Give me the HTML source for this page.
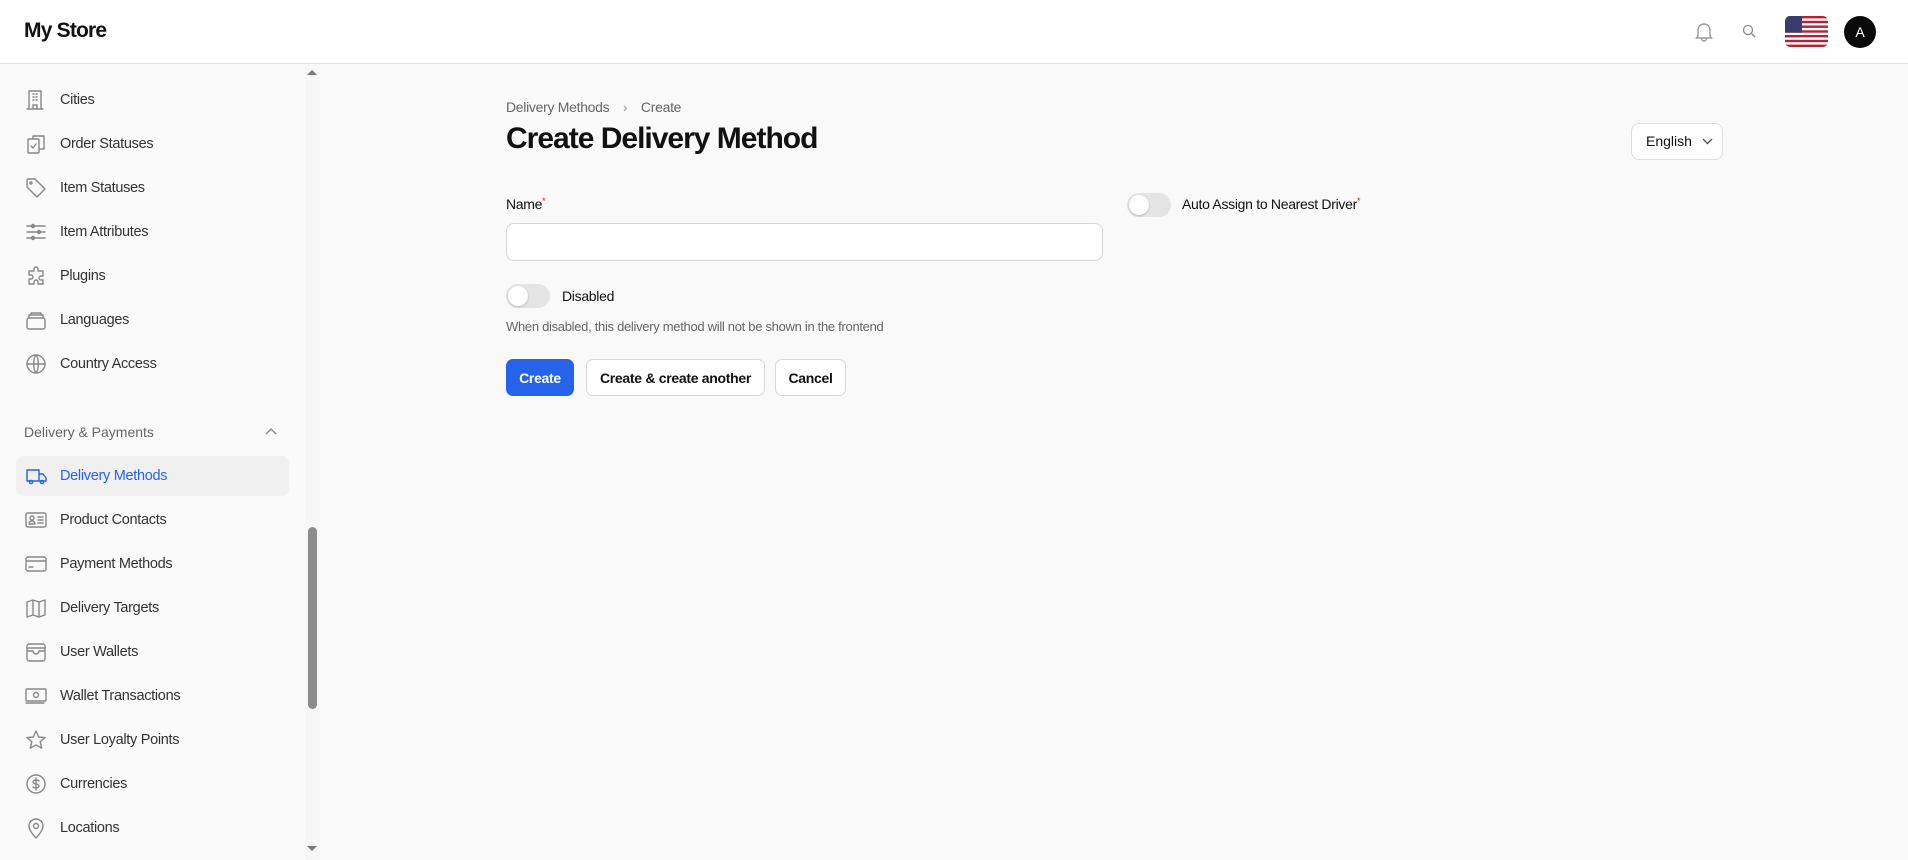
<!DOCTYPE html>
<html><head><meta charset="utf-8"><style>
*{box-sizing:border-box;margin:0;padding:0}
body{width:1908px;height:860px;overflow:hidden;background:#f9f9f9;font-family:"Liberation Sans",sans-serif;color:#111;position:relative}
.hdr{position:absolute;left:0;top:0;width:1908px;height:64px;background:#fff;border-bottom:1px solid #e3e3e3}
.logo{position:absolute;left:24px;top:19px;font-size:21px;font-weight:bold;letter-spacing:-0.8px}
.side{position:absolute;left:0;top:64px;width:320px;height:796px;background:#fafafa}
.sb{position:absolute;left:305px;top:64px;width:15px;height:796px;background:#f7f7f7}
.thumb{position:absolute;left:308px;top:527px;width:9px;height:182px;border-radius:5px;background:#8c8c8c}
.item{position:absolute;left:16px;width:273px;height:40px;border-radius:8px;font-size:14.5px;color:#333;letter-spacing:-0.3px}
.item svg{position:absolute;left:9px;top:9px;width:22px;height:22px;fill:none;stroke:#888;stroke-width:1.4;stroke-linecap:round;stroke-linejoin:round}
.item span{position:absolute;left:44px;top:12px}
.act{background:#f0f0f0;color:#2563eb}
.act svg{stroke:#2563eb}
.grp{position:absolute;left:24px;top:424px;font-size:14px;color:#666}
.main{position:absolute;left:506px}
.bc{top:99px;font-size:14px;color:#666;letter-spacing:-0.3px}
h1{position:absolute;left:506px;top:122px;font-size:30px;font-weight:bold;letter-spacing:-1px}
.lbl{font-size:14px;letter-spacing:-0.3px}
.req{color:#e11;font-size:9px;vertical-align:top}
.inp{position:absolute;left:506px;top:223px;width:597px;height:38px;background:#fff;border:1px solid #d6d6d6;border-radius:8px}
.tg{position:absolute;width:44px;height:24px;border-radius:12px;background:#e4e4e4}
.tg:after{content:"";position:absolute;left:2px;top:2px;width:20px;height:20px;border-radius:50%;background:#fff;box-shadow:0 1px 2px rgba(0,0,0,.2)}
.btn{position:absolute;top:359px;height:37px;border-radius:7px;font-size:14px;font-weight:bold;text-align:center;line-height:37px;background:#fff;border:1px solid #d8d8d8;letter-spacing:-0.3px}
</style></head><body>
<div class="hdr"><div class="logo">My Store</div>
<svg style="position:absolute;left:1694px;top:21px" width="20" height="22" viewBox="0 0 20 22" fill="none" stroke="#999" stroke-width="1.4"><path d="M4 15V9a6 6 0 0112 0v6l1.5 2h-15z"/><path d="M7.5 17.5a2.5 2.5 0 005 0"/></svg>
<svg style="position:absolute;left:1742px;top:24px" width="15" height="15" viewBox="0 0 15 15" fill="none" stroke="#888" stroke-width="1.3"><circle cx="6" cy="6" r="4.5"/><path d="M9.5 9.5L13 13"/></svg>
<svg style="position:absolute;left:1785px;top:16px" width="43" height="31" viewBox="0 0 43 31"><defs><clipPath id="c"><rect width="43" height="31" rx="5"/></clipPath></defs><g clip-path="url(#c)"><rect width="43" height="31" fill="#fff"/><g fill="#b22234"><rect y="0" width="43" height="2.4"/><rect y="4.8" width="43" height="2.4"/><rect y="9.5" width="43" height="2.4"/><rect y="14.3" width="43" height="2.4"/><rect y="19" width="43" height="2.4"/><rect y="23.8" width="43" height="2.4"/><rect y="28.6" width="43" height="2.4"/></g><rect width="17" height="16.7" fill="#3c3b6e"/></g></svg>
<div style="position:absolute;left:1844px;top:16px;width:32px;height:32px;border-radius:50%;background:#0a0a0a;color:#fff;font-size:14px;text-align:center;line-height:32px">A</div>
</div>
<div class="side"></div><div class="sb"></div><div class="thumb"></div>
<div style="position:absolute;left:307px;top:70px;border:5px solid transparent;border-bottom:5px solid #777;border-top:0"></div>
<div style="position:absolute;left:307px;top:846px;border:5px solid transparent;border-top:5px solid #777;border-bottom:0"></div>

<div class="item" style="top:80px"><svg viewBox="0 0 22 22"><path d="M4 20V2h12v18M2 20h16M8 20v-4h4v4M8 5h1M11 5h1M8 8h1M11 8h1M8 11h1M11 11h1"/></svg><span>Cities</span></div>
<div class="item" style="top:124px"><svg viewBox="0 0 22 22"><rect x="3" y="6" width="11" height="14" rx="1"/><path d="M8 6V3h11v13h-5M6 13l2 2 3-4"/></svg><span>Order Statuses</span></div>
<div class="item" style="top:168px"><svg viewBox="0 0 22 22"><path d="M2 3v7l10 10 8-8L10 2H3z"/><circle cx="6" cy="6" r="1"/></svg><span>Item Statuses</span></div>
<div class="item" style="top:212px"><svg viewBox="0 0 22 22"><path d="M2 5h18M2 11h18M2 17h18"/><circle cx="8" cy="5" r="1.5"/><circle cx="14" cy="11" r="1.5"/><circle cx="8" cy="17" r="1.5"/></svg><span>Item Attributes</span></div>
<div class="item" style="top:256px"><svg viewBox="0 0 22 22"><path d="M9 4a2 2 0 014 0v2h5v5h-2a2 2 0 000 4h2v4h-5v-2a2 2 0 00-4 0v2H4v-5h2a2 2 0 000-4H4V6h5z"/></svg><span>Plugins</span></div>
<div class="item" style="top:300px"><svg viewBox="0 0 22 22"><rect x="2" y="9" width="18" height="11" rx="2"/><path d="M4 9V6h14v3M6 6V4h10v2"/></svg><span>Languages</span></div>
<div class="item" style="top:344px"><svg viewBox="0 0 22 22"><circle cx="11" cy="11" r="9"/><path d="M2 11h18M11 2c-3 3-3 15 0 18M11 2c3 3 3 15 0 18"/></svg><span>Country Access</span></div>
<div class="grp">Delivery &amp; Payments</div>
<svg style="position:absolute;left:265px;top:427px" width="12" height="8" viewBox="0 0 12 8" fill="none" stroke="#888" stroke-width="1.3"><path d="M1 7l5-5 5 5"/></svg>
<div class="item act" style="top:456px"><svg viewBox="0 0 22 22"><path d="M2 5h12v11H2zM14 9h4l3 4v3h-7"/><circle cx="6" cy="17" r="1.6"/><circle cx="17" cy="17" r="1.6"/></svg><span>Delivery Methods</span></div>
<div class="item" style="top:500px"><svg viewBox="0 0 22 22"><rect x="1" y="4" width="20" height="14" rx="2"/><circle cx="7" cy="9" r="2"/><path d="M4 15a3 3 0 016 0zM13 8h5M13 11h5M13 14h5"/></svg><span>Product Contacts</span></div>
<div class="item" style="top:544px"><svg viewBox="0 0 22 22"><rect x="1" y="4" width="20" height="14" rx="2"/><path d="M1 8h20M4 14h4"/></svg><span>Payment Methods</span></div>
<div class="item" style="top:588px"><svg viewBox="0 0 22 22"><path d="M2 5l6-2 6 2 6-2v15l-6 2-6-2-6 2zM8 3v15M14 5v15"/></svg><span>Delivery Targets</span></div>
<div class="item" style="top:632px"><svg viewBox="0 0 22 22"><rect x="2" y="3" width="18" height="17" rx="2"/><path d="M2 7h18M2 10h6a3 3 0 006 0h6"/></svg><span>User Wallets</span></div>
<div class="item" style="top:676px"><svg viewBox="0 0 22 22"><rect x="1" y="4" width="20" height="12" rx="1"/><circle cx="11" cy="10" r="2.5"/><path d="M1 18h18"/></svg><span>Wallet Transactions</span></div>
<div class="item" style="top:720px"><svg viewBox="0 0 22 22"><path d="M11 2l2.7 6 6.3.6-4.8 4.2 1.5 6.4L11 16l-5.7 3.2 1.5-6.4L2 8.6 8.3 8z"/></svg><span>User Loyalty Points</span></div>
<div class="item" style="top:764px"><svg viewBox="0 0 22 22"><circle cx="11" cy="11" r="9"/><path d="M14 8c-1-1.5-6-1.5-6 1s6 1.5 6 4-5 2.5-6 1M11 5v12"/></svg><span>Currencies</span></div>
<div class="item" style="top:808px"><svg viewBox="0 0 22 22"><path d="M11 21s7-7 7-12a7 7 0 00-14 0c0 5 7 12 7 12z"/><circle cx="11" cy="9" r="2.5"/></svg><span>Locations</span></div>

<div class="main bc">Delivery Methods <span style="margin:0 10px;color:#999">&#8250;</span> Create</div>
<h1>Create Delivery Method</h1>
<div style="position:absolute;left:1631px;top:123px;width:92px;height:37px;background:#fff;border:1px solid #ddd;border-radius:8px;font-size:14px;line-height:35px;padding-left:14px">English<svg style="position:absolute;left:70px;top:14px" width="11" height="7" viewBox="0 0 11 7" fill="none" stroke="#555" stroke-width="1.4"><path d="M1 1l4.5 4.5L10 1"/></svg></div>
<div class="main lbl" style="top:196px">Name<span class="req">*</span></div>
<div class="inp"></div>
<div class="tg" style="left:1127px;top:193px"></div>
<div class="lbl" style="position:absolute;left:1182px;top:196px">Auto Assign to Nearest Driver<span class="req">*</span></div>
<div class="tg" style="left:506px;top:284px"></div>
<div class="lbl" style="position:absolute;left:562px;top:288px">Disabled</div>
<div class="main" style="top:319px;font-size:13px;color:#666;letter-spacing:-0.3px">When disabled, this delivery method will not be shown in the frontend</div>
<div class="btn" style="left:506px;width:68px;background:#2563eb;color:#fff;border-color:#2563eb">Create</div>
<div class="btn" style="left:586px;width:179px">Create &amp; create another</div>
<div class="btn" style="left:775px;width:71px">Cancel</div>
</body></html>
